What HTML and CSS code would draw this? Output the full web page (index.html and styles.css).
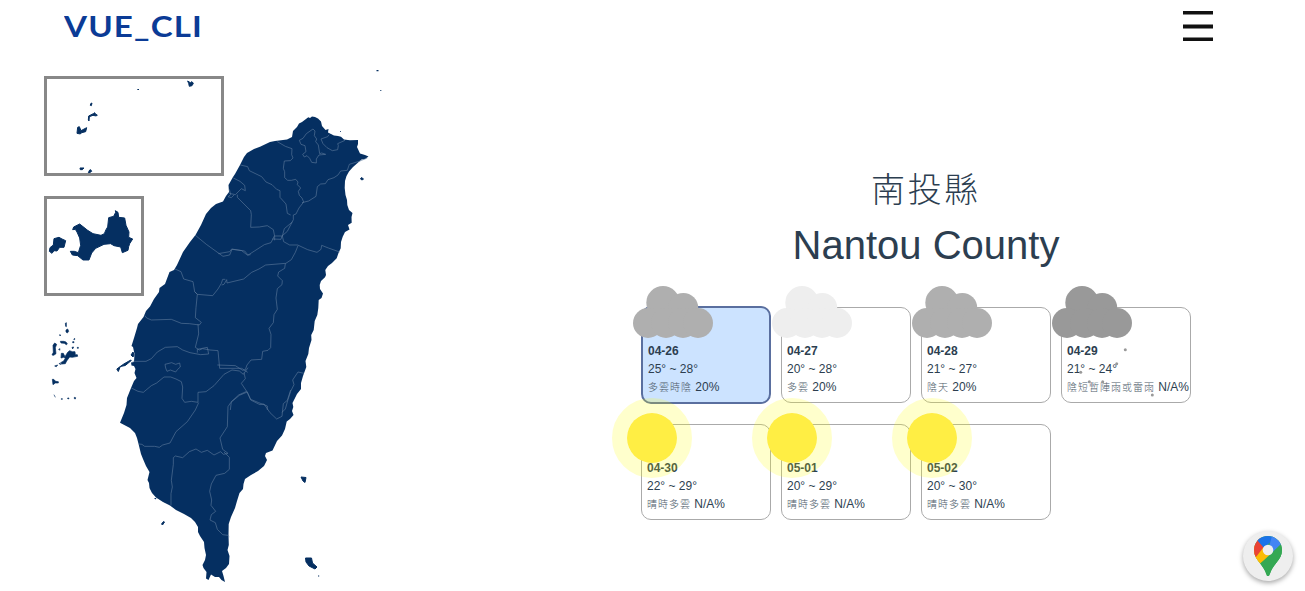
FILE: index.html
```html
<!DOCTYPE html>
<html lang="zh-Hant">
<head>
<meta charset="utf-8">
<title>VUE_CLI</title>
<link rel="stylesheet" href="styles.css">
</head>
<body>
<svg class="defs" width="0" height="0">
  <symbol id="cloud" viewBox="0 0 80 52">
    <circle cx="30" cy="16.7" r="16.7"/><circle cx="50.3" cy="21.9" r="14.9"/>
    <circle cx="15" cy="37" r="15"/><circle cx="33" cy="37" r="15"/><circle cx="50" cy="37" r="15"/><circle cx="65" cy="37" r="15"/>
  </symbol>
</svg>
<header class="topbar">
  <svg class="logo" width="142" height="52"><text x="0" y="37" textLength="139" lengthAdjust="spacingAndGlyphs">VUE_CLI</text></svg>
  <button class="menu" aria-label="menu"><svg width="30" height="30" viewBox="0 0 30 30" fill="#111"><path d="M0 0h30v3.5H0zM0 13.5h30v4H0zM0 26.5h30V30H0z"/></svg></button>
</header>
<main class="content">
  <svg class="map" viewBox="0 60 400 531" width="400" height="531">
    <g class="inset"><rect x="45.5" y="77.500" width="177" height="97"/><rect x="45.500" y="197.500" width="97" height="97"/></g>
    <!-- main island -->
    <g class="land">
      <path d="M308.300 117.300L310 118 312 116.500 315 117 318 118.500 321 121.500 322 126 325.500 130 328.500 129 328 132.500 331 134 334 135.500 338 136 341 136.700 344 139.500 350 140.300 358 140 358 144 357 147 360 153.500 365 155 368.500 156.500 365 159 361.500 159.500 357 163.500 353 167 349 171.500 346.500 176 345 181 344.700 188 345.500 195 347 200 347.300 205 349 210 352.500 213 351.500 217 351.700 222.700 348 225 349.500 229.500 345 232 342.700 236.700 341 242 340.700 248.300 338.500 253 336.700 258.300 332 263 328 266 325.300 270 326 275 325 277.300 321 281 319.700 285 320 289 323 293.500 321.500 298 318.700 300 318.300 308 317.300 315 314.700 321 313.700 330 311.200 335 311.500 340 309 348 308.300 354 305.500 361 306.300 367 303 376 301 383 301 389 297 394 294 400 292.500 403 293.300 407 292 411 293.500 415 290 419 286.700 421.500 285 429 282 435.500 277 441 272.500 450.500 266 453 265 456 267 460 264 466 258 471 251 475 245 479 243.500 484 243 489 239.500 493 237 501 235 508 231 517 228.700 524 228.500 535 228.800 545 227.500 550 229.500 556 229 564 226 568 222 571 223.500 576 225 582 221.500 580 219 577 215 577 211 574.500 208.500 580 206 578.500 206.500 572 203.500 568 202.500 565 205 560 206 555 204.500 548 204 542 200 536 198 532 198 527 195 522 191 518 184 514 176 510 170 505.500 163 502 156 497.500 152 493 149.500 488 149 483 147.500 480 149.500 472 146 466 143 459 141 454 138.300 443 137 438 135 433 130 428 120 422.700 124 413 126.500 405 127 398 131 388 134 381 136.500 378 134.500 373 135.500 369 134 366 131.500 365.500 131 362.500 134 362 134.500 354 133 347 131.500 346 134 338 137 328 138 324 143.500 317 146 311 150 306.500 154 299 159 292 159.500 288 165 284 169.500 272 174 270 177 265 183 252 190 242 195.500 235 201 225 206 214 211 208 216 204 223 201.500 226 196 229 192 228.500 185 233 177 235 174 240 165 244 157 247 153 254 149 260 146.700 270 142 275 141 287 139.500 292 137 293 131 297 127 299 123.500 302 122Z"/>
      <path class="ink" d="M116.800 369l7-5 7-4 .5.500-6 5-5 1-2 5zM131 355l2-3 1 3-1 2z"/>
      <path class="ink" d="M301 477l5 .500-1 5-2-1.500zM305.500 558l6 0 1 5 4.500 4-2 2-6-3-3-4zM161.500 524l2-2.500 1 .500-2 3zM360.500 179l1-1.500 2 1.500-1.500 1z"/>
      <path d="M376.500 70h2v1.200h-2zM380.300 90h1v1h-1zM318 575.500h1.200v1h-1.200zM340 131h.8v1h-.8z"/>
      <path d="M154 498l2.500 0-1 1.500z"/>
    </g>
    <!-- county lines -->
    <g class="borders">
      <g transform="translate(220 60) scale(.33333)">
        <path d="M172 245l24 14 20 7-1 18 4 10-8 8-18 1-3 22 4 10 0 18 9 8 11 0 13-3 7 8-2 8 10 10-7 10 3 12 8 8 5 12-14 18-9 18-8 3 0 14-18 35-16 14-3 10-26-1"/>
        <path d="M212 465l-10-5-4-28-18-20 0-20-10-4-14-14-18-8-13-16-37-18-5-12-22-5"/>
        <path d="M246 428l20-5 22-14 4-29 10-8 14-1 8-12 18-6 12-8 8-12 20-2 6-18 32-10 22-9"/>
        <path d="M279 207l-20 14-10 14-11 6 5 12 12 4 3 18-10 8 5 8 8-4 8 8 6 12 14 2 0-12 8-12 20-2-12-4-6 2-4-26-8-10 3-8-7-10 2-14z"/>
        <path d="M303 237l20-7 4-6M303 237l6 14 12 12 16 9 16-3 2-12-2-6 22-10"/>
        <path d="M40 354l20 10 14 12 2 16-12-6-18 18-18-4M28 388l4 16-8 6 10 3 8-8M52 404l0 8 40 40 2 12-2 38 26-1 24-4 18 12 4 20 0 12"/>
      </g>
      <g transform="translate(110 220) scale(.33333)">
        <path d="M255 45l34 28 50 36 20-4 7-17 18 2 20 3 10 12 8-1"/>
        <path d="M195 147l18 8 8 22 28 8 5 30 8 8 46 4 16-20 10-17 4-12 8 0"/>
        <path d="M254 215l8 8-4 40-2 30 18 14-6 8-30-4-24-1-30-12-60 2-14-6-6-8"/>
        <path d="M264 312l2 30-10 40 12 8 10-4 22 4 24 2 5 53 66 0 18 12M262 398l0-10 30-6 4 20-24 2-32-6-22-8-16-10-36 2-24 14-18 20-16 8-40 0M165 433l20-5 12 5 12-4 2 12-8 7-6 8-16-6-10 4-4-10zM64 504l20 10 16 3 24-20 16-8 22-18 20 0 16 6 16 8 4 16-2 34 8 12 20-3 20 3 0-30 24-2 24-18 30-34 24-13 22 3 12 10 14-20"/>
      </g>
      <g transform="translate(220 220) scale(.33333)">
        <path d="M163 48l24 0 6-22 24-20M163 48l-10 20-20 6-28 18-22 14-18-14-30-5-6 8-34 6M187 48l4 17 18 10 24 0 30 14 28 8 12-9 2-12 20 8 34 12M234 77l-8 20-12 22-18 12-2 14-18 11-3 12 14 14-1 12-14 12-4 28 4 34-10 16-2 24-13 17 6 18-1 40-8 8-16 3-3 24-32 2-12 15-5 14-8 2-22-14-54-2M197 130l-60 5-20 12-22 10-24 20-50 12-1-10-8 14-7 2M72 458l4 18-12 14 16 24-24 11-22 20-3 25M80 514l12 24 24 10 26 10 0 12M252 460l-18-4-16 24 4 14-10 20-8 25-8 28-10 10"/>
      </g>
      <g transform="translate(110 390) scale(.33333)">
        <path d="M412 6l-24 10-26 22-8 12-2 60-22 34 8 34 16 12-14 3-8-8-20 10-20-14-18 6-16-10-20 8-20 18-22-5-6 5 0 20-6 48 3 20-4 20 0 35M342 186l16 16 0 36-14 12-26 6-14 26-5 22 6 26-2 16 14 18-13 10-4 16 16 8 6 20 16 16 16 2 4 4M412 6l10 24 28 14 12-2 18 26 20 19 16-8 4-38 12-10 10-31M266 38l-10 22-24 35-34 30-18 34-22 6-10 7-14-3-30 0-8-6-9-1"/>
      </g>
    </g>
    <!-- outlying islands -->
    <g class="land" transform="translate(30 65) scale(.33333)">
      <path class="ink" d="M256 437l8 5 2 15 18 2 4 22 9 20-1 16 12 5-9 14-3 9-2 11-17 7-5-17-20-4-10-6-20 2-25 12-12 14-8 21-18 0-16-13-16-2-6-11 12 0 12 4 7-22-3-22-8-18-5-8-8 1 3-8 18-9 24 19 16 10 24 5 10-5 5-12 5-8 3-28 15-4 6-12z"/>
      <path class="ink" d="M72 521l15-4 9 5 11 5-5 20-13 0-8 11-9-1-6 8-8-6 2-11 10-8z"/>
      <path class="ink" d="M143 187l5-2 5 12 17-9-3 12-12 3-4 4-10-2zM176 153l14-7 4-3 3 5 5 2-3 3-10-2-11 4-1 13-2-3zM182 116l4-2-2 8-3-1zM150 309l12 0-5 5-6 0zM175 323l4-8 3-1 3 5-4 3zM473 48l8 5 5-3 4 5-4 7-8 2-2-9z"/>
      <path d="M322 72h5v3h-5z"/>
    </g>
    <g class="land penghu" transform="translate(40 310) scale(.33333)">
      <path d="M64 130l6 0 5 10 8-13 6-5 8 3 8 0 1 9 6 0 1 5-16 3-8-1-9 12-4 8-10 1-4-4 9-5 5-8-5-3-8 2zM39 106l5-7 6 4-4 10 2 18-7 5-5-1 4-8zM61 94l10 0 7 2 4 6-3 2-6-4-10-1zM78 60l5-3 3 7-4 5-4-3zM76 40l3-2 0 12-2-1zM37 208l4 0 6 6 8 1 0 4-9 0-7 5zM42 254l4 8M44 168l9-3-4 5zM103 262l4 1-1 4-3-1zM83 264l4 0-1 3-3-1zM98 95h4v3h-4zM101 88l3-3 0 4zM96 112l5-1-3 6zM56 118l4-2-1 5zM59 74l3 1-2 3zM58 160l6 3-6-1zM64 266h3v2h-3zM112 112h3v3h-3z"/>
    </g>
  </svg>
  <section class="forecast">
    <h1 class="name-zh">南投縣</h1>
    <h2 class="name-en">Nantou County</h2>
    <div class="cards">
      <article class="card active"><svg class="cloud overcast"><use href="#cloud"/></svg><b>04-26</b><p>25° ~ 28°</p><p><span class="zh">多雲時陰</span> 20%</p></article>
      <article class="card"><svg class="cloud fair"><use href="#cloud"/></svg><b>04-27</b><p>20° ~ 28°</p><p><span class="zh">多雲</span> 20%</p></article>
      <article class="card"><svg class="cloud overcast"><use href="#cloud"/></svg><b>04-28</b><p>21° ~ 27°</p><p><span class="zh">陰天</span> 20%</p></article>
      <article class="card"><svg class="cloud storm"><use href="#cloud"/></svg><b>04-29</b><p>21° ~ 24°</p><p><span class="zh">陰短暫陣雨或雷雨</span> N/A%</p>
        <svg class="rain" width="130" height="96"><circle cx="63.300" cy="41.700" r="1.500"/><circle cx="54.700" cy="55.700" r="1.500"/><circle cx="18.700" cy="64.300" r="1.500"/><circle cx="27.300" cy="73.700" r="1.500"/><circle cx="40.700" cy="73.700" r="1.500"/><circle cx="90.300" cy="87" r="1.500"/></svg></article>
      <article class="card"><i class="sun"></i><b>04-30</b><p>22° ~ 29°</p><p><span class="zh">晴時多雲</span> N/A%</p></article>
      <article class="card"><i class="sun"></i><b>05-01</b><p>20° ~ 29°</p><p><span class="zh">晴時多雲</span> N/A%</p></article>
      <article class="card"><i class="sun"></i><b>05-02</b><p>20° ~ 30°</p><p><span class="zh">晴時多雲</span> N/A%</p></article>
    </div>
  </section>
</main>
<a class="pin" aria-label="map">
  <svg width="28" height="40" viewBox="0 0 28 40">
    <clipPath id="drop"><path d="M14 0C6 0 0 6.200 0 14c0 5 2 8 5 12 4 5 6 8 7.300 12.500.5 2 2.900 2 3.400 0C17 34 19 31 23 26c3-4 5-7 5-12C28 6.200 22 0 14 0z"/></clipPath>
    <g clip-path="url(#drop)"><path fill="#34a853" d="M0 0h28v40H0z"/><path fill="#fbbc04" d="M0 10h14v4L5 27-2 22z"/><path fill="#fbbc04" d="M10 17.500l8 .500L5.500 28 0 22z"/><path fill="#ea4335" d="M-2 0H6l6 8-10 13-4-4z"/><path fill="#1a73e8" d="M3 4l5-6h12v5L10 12z"/><path fill="#4285f4" d="M18 0h7l3 9L17 20l-3-6z"/><path fill="#34a853" d="M27 8l3 4v12L14 40 6 28z"/></g>
    <circle cx="14" cy="14" r="5.300" fill="#eee"/>
  </svg>
</a>
</body>
</html>
```
FILE: styles.css
```css
* { box-sizing: border-box; }
body { margin: 0; height: 591px; overflow: hidden; background: #fff; color: #2c3e50; font-family: "Liberation Sans", "Noto Sans CJK TC", sans-serif; }
.defs { position: absolute; }
.topbar { height: 60px; display: flex; justify-content: space-between; padding: 0 92px 0 64px; }
.logo { fill: #0b3b96; font: 700 28.500px Lato, sans-serif; letter-spacing: 1px; }
.menu { border: 0; background: none; padding: 11px 0 0; height: 41px; }
.menu svg { display: block; }
.content { display: flex; height: 531px; }
.map { flex: none; display: block; }
.inset { fill: none; stroke: #888; stroke-width: 3; }
.land { fill: #052f61; }
.ink { stroke: #052f61; stroke-width: 1; vector-effect: non-scaling-stroke; }
.penghu { stroke: #052f61; stroke-width: 2; }
.borders { fill: none; stroke: #5f7c9d; stroke-width: .6; }
.borders path { vector-effect: non-scaling-stroke; }
.forecast { width: 570px; margin-left: 241px; padding-top: 104px; }
.name-zh { margin: 0; height: 48px; line-height: 48px; text-align: center; font-weight: 300; font-size: 34px; letter-spacing: 2.700px; font-family: "Noto Sans CJK TC", sans-serif; }
.name-en { margin: 9px 0 0; height: 48px; line-height: 48px; text-align: center; font-weight: 400; font-size: 40px; }
.cards { margin-top: 37px; display: grid; grid-template-columns: repeat(4, 130px); gap: 20px 10px; align-items: center; }
.card { position: relative; height: 96px; border: 1px solid #aaa; border-radius: 10px; padding: 34px 0 0 5px; font-size: 12px; line-height: 18px; white-space: nowrap; }
.card b, .card p { display: block; margin: 0; }
.card.active { height: 98px; border: 2px solid #5a6f9f; background: #cce3ff; }
.zh { display: inline-block; height: 18px; vertical-align: top; font: 300 10px/18px "Noto Sans CJK TC", sans-serif; letter-spacing: 1px; color: #4c5a68; }
.cloud { position: absolute; left: -10px; top: -22px; width: 80px; height: 52px; }
.overcast { fill: #afafaf; }
.fair { fill: #eee; }
.storm { fill: #999; }
.rain { position: absolute; left: 0; top: 0; fill: #999; }
.sun { position: absolute; left: -15px; top: -12px; width: 50px; height: 50px; border-radius: 50%; background: #ffee44; }
.sun::after { content: ""; position: absolute; inset: -15px; border: 15px solid rgba(255, 255, 0, .2); border-radius: 50%; }
.pin { position: absolute; left: 1243px; top: 531px; width: 50px; height: 50px; border-radius: 50%; background: #eee; display: flex; align-items: center; justify-content: center; box-shadow: 0 2px 5px rgba(0, 0, 0, .35); }
```
